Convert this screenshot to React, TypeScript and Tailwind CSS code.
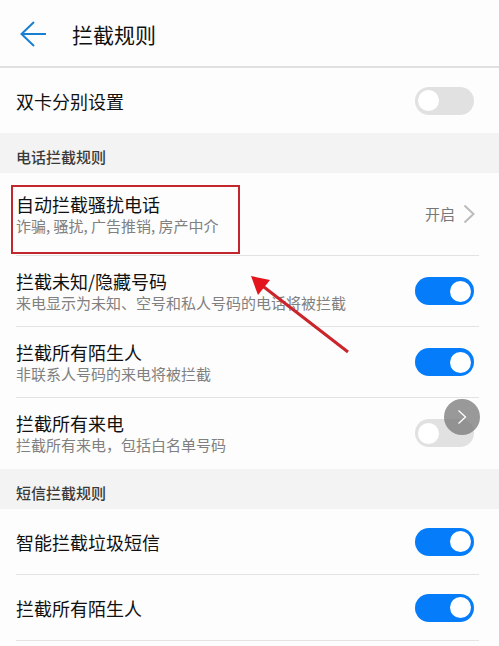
import { useState } from 'react';

interface Rule {
    id: string;
    title: string;
    description?: string;
    enabled: boolean;
}

const PHONE_RULES: Rule[] = [
    { id: 'hidden', title: '拦截未知/隐藏号码', description: '来电显示为未知、空号和私人号码的电话将被拦截', enabled: true },
    { id: 'stranger', title: '拦截所有陌生人', description: '非联系人号码的来电将被拦截', enabled: true },
    { id: 'all', title: '拦截所有来电', description: '拦截所有来电，包括白名单号码', enabled: false },
];

const SMS_RULES: Rule[] = [
    { id: 'sms-spam', title: '智能拦截垃圾短信', enabled: true },
    { id: 'sms-stranger', title: '拦截所有陌生人', enabled: true },
];

const DIVIDER = {
    line: 'border-b border-[#e3e3e3]',
    blank: 'border-b border-transparent',
    none: '',
};

const SectionTitle = ({ children }: { children: string }) => (
    <h2 className="flex h-10 items-center bg-[#f3f3f3] px-4 pt-3 pb-1 text-[15px] font-medium text-[#3a3a3a]">{children}</h2>
);

const RuleRow = ({ rule, divider = 'line' }: { rule: Rule; divider?: keyof typeof DIVIDER }) => {
    const [enabled, setEnabled] = useState(rule.enabled);
    const height = rule.description ? 'min-h-[70px]' : 'min-h-[65px]';

    return (
        <div className={`ml-4 mr-5 ${DIVIDER[divider]}`}>
            <div className={`flex items-center justify-between pr-[5px] ${height}`}>
                <label htmlFor={rule.id} className="min-w-0 flex-1">
                    <span className="block text-[18px] leading-6 text-[#111]">{rule.title}</span>
                    {rule.description && (
                        <span className="block text-[15px] leading-5 text-[#808080]">{rule.description}</span>
                    )}
                </label>
                <input
                    id={rule.id}
                    type="checkbox"
                    role="switch"
                    checked={enabled}
                    onChange={e => setEnabled(e.target.checked)}
                    className="flex h-7 w-[59px] shrink-0 cursor-pointer appearance-none items-center rounded-full bg-[#e1e1e1] px-[3px] before:size-[21px] before:rounded-full before:bg-white checked:justify-end checked:bg-[#057dfa]"
                />
            </div>
        </div>
    );
};

export default function App() {
    return (
        <div className="relative min-h-screen bg-[#fdfdfd] font-['Noto_Sans_CJK_SC',sans-serif]">
            {/* Title bar */}
            <header className="flex h-[68px] items-center gap-6 border-b-2 border-[#e0e0e0] px-5 pt-0.5">
                <button type="button" aria-label="返回">
                    <svg width="28" height="28" viewBox="0 0 28 28" fill="none" stroke="#1a7fd0" strokeWidth="2">
                        <path d="M14 2 1.5 14 14 26M1.5 14H26" />
                    </svg>
                </button>
                <h1 className="text-[21px] leading-8 text-[#111]">拦截规则</h1>
            </header>

            <main>
                <RuleRow rule={{ id: 'dual-sim', title: '双卡分别设置', enabled: false }} divider="none" />

                <SectionTitle>电话拦截规则</SectionTitle>
                <div className="relative">
                    <button type="button" className="block w-full pl-4 pr-5 text-left">
                        <span className="flex min-h-[83px] items-center justify-between border-b border-[#e3e3e3] pr-1">
                            <span>
                                <span className="block text-[18px] leading-6 text-[#111]">自动拦截骚扰电话</span>
                                <span className="block text-[15px] leading-5 text-[#808080]">诈骗, 骚扰, 广告推销, 房产中介</span>
                            </span>
                            <span className="flex items-center gap-2 text-[15px] text-[#777]">
                                开启
                                <svg width="12" height="20" viewBox="0 0 12 20" fill="none" stroke="#bbb" strokeWidth="2">
                                    <path d="m1.5 1.5 9 8.5-9 8.5" />
                                </svg>
                            </span>
                        </span>
                    </button>

                    {/* Highlight box and the arrow that points at it */}
                    <div className="pointer-events-none absolute left-[11px] top-3 h-[69px] w-[229px] border-2 border-[#c1272d]" />
                    <svg className="pointer-events-none absolute left-[250px] top-[101px]" width="100" height="80" viewBox="0 0 100 80">
                        <path d="m10 10 88 68" stroke="#c9252b" strokeWidth="3" />
                        <path d="m1 2 19 4L8 21Z" fill="#e3141b" />
                    </svg>
                </div>
                {PHONE_RULES.map((rule, i) => (
                    <RuleRow key={rule.id} rule={rule} divider={i === PHONE_RULES.length - 1 ? 'blank' : 'line'} />
                ))}

                <SectionTitle>短信拦截规则</SectionTitle>
                {SMS_RULES.map(rule => (
                    <RuleRow key={rule.id} rule={rule} />
                ))}
            </main>

            {/* Floating next button */}
            <button
                type="button"
                aria-label="下一页"
                className="absolute right-[19px] top-[399px] flex size-9 items-center justify-center rounded-full bg-[#777]/75"
            >
                <svg width="10" height="14" viewBox="0 0 10 14" fill="none" stroke="#fff" strokeWidth="1.3">
                    <path d="m1.5.5 7 6.5-7 6.5" />
                </svg>
            </button>
        </div>
    );
}
